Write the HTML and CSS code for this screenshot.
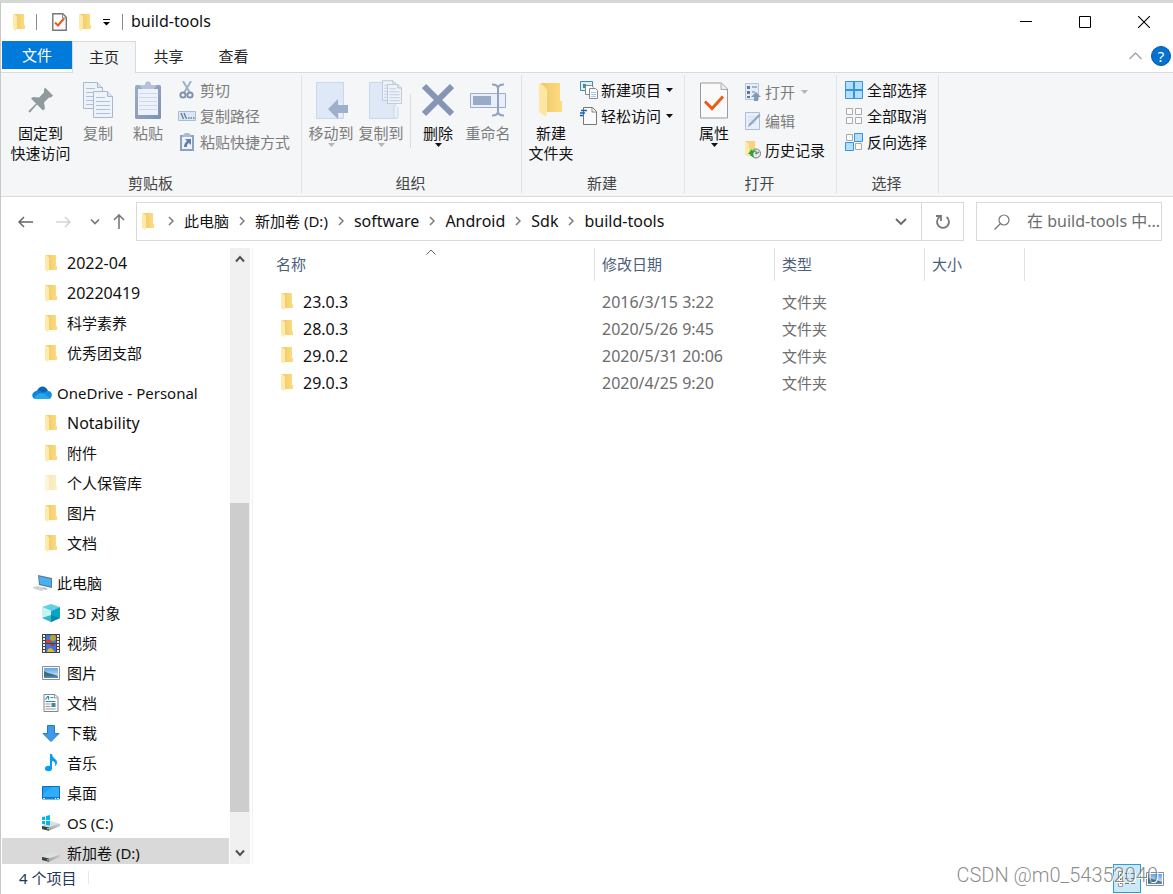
FILE: index.html
```html
<!DOCTYPE html>
<html lang="zh-CN">
<head>
<meta charset="utf-8">
<title>build-tools</title>
<link rel="stylesheet" href="styles.css">
</head>
<body>
<svg class="defs" aria-hidden="true">
  <defs>
    <linearGradient id="gold" x1="0" x2="1"><stop offset="0" stop-color="#efc968"/><stop offset="1" stop-color="#fddc80"/></linearGradient>
    <linearGradient id="clip" x1="0" y1="0" x2="1" y2="1"><stop offset="0" stop-color="#9badcb"/><stop offset="1" stop-color="#7e92b3"/></linearGradient>
    <linearGradient id="sky" x1="0" y1="0" x2="0" y2="1"><stop offset="0" stop-color="#5fa5ea"/><stop offset="1" stop-color="#d9eefb"/></linearGradient>
    <linearGradient id="disk" x1="0" x2="1"><stop offset="0" stop-color="#8d8d8d"/><stop offset="1" stop-color="#c9c9c9"/></linearGradient>
    <symbol id="folder" viewBox="0 0 12 17"><path d="M1 0h10v11h1v4H3z" fill="url(#gold)"/><path d="M0 0l2 .6 2 1.9V15l-1 2-3-2z" fill="#ffe9ab"/></symbol>
    <symbol id="chev" viewBox="0 0 6 10"><path d="M1 1l4 4-4 4" fill="none" stroke="#7a7a7a" stroke-width="1.5"/></symbol>
    <symbol id="down" viewBox="0 0 7 4"><path d="M0 0h7L3.500 4z" fill="currentColor"/></symbol>
    <symbol id="page" viewBox="0 0 20 27"><path d="M.5.5h14l5 5v21H.5z" fill="#eef3fa" stroke="#a9b8d0"/><path d="M14.500.5v5h5" fill="#dbe4f2" stroke="#a9b8d0"/><path d="M3 6.500h9M3 10.500h14M3 14.500h14M3 18.500h14M3 22.500h14" stroke="#b0bfd8"/></symbol>
    <symbol id="picture" viewBox="0 0 18 14"><path d="M.5.5h17v13H.5z" fill="#fff" stroke="#8e8e8e"/><path d="M2 2h14v10H2z" fill="url(#sky)"/><path d="M2 5l4 2 4 1 6 2v2H2z" fill="#426f70"/><path d="M2 10.500l14-.5v2H2z" fill="#4b88c4"/></symbol>
    <symbol id="drive" viewBox="0 0 18 10"><path d="M0 5l9-5 9 3v2L7 9z" fill="#dedede"/><path d="M0 5l7 1.500 11-4v2.600L7 9.800 0 8z" fill="url(#disk)"/><path d="M0 5l7 1.500v3.300L0 8z" fill="#3f4440"/><path d="M5 7h2v1.400H5z" fill="#52dc4b"/></symbol>
  </defs>
</svg>

<div class="window">
  <header class="titlebar">
    <svg class="i-folder" width="12" height="17"><use href="#folder"/></svg>
    <span class="bar"></span>
    <button class="quick" aria-label="属性"><svg width="15" height="18" viewBox="0 0 15 18"><path d="M.8.8h10l3.500 3.500v13H.8z" fill="#fbfbfb" stroke="#777" stroke-width="1.400"/><path d="M10.500 1v4h4" fill="none" stroke="#888"/><path d="M3 9.500l3 3 6-7" fill="none" stroke="#e8581f" stroke-width="2"/></svg></button>
    <button class="quick" aria-label="新建文件夹"><svg width="12" height="17"><use href="#folder"/></svg></button>
    <button class="quick" aria-label="自定义快速访问工具栏"><svg width="7" height="7" viewBox="0 0 7 7"><path d="M0 .5h7" stroke="#000"/><path d="M0 3h7L3.500 6.500z"/></svg></button>
    <span class="bar"></span>
    <h1>build-tools</h1>
    <div class="winbtns">
      <button aria-label="最小化"><svg width="12" height="12"><path d="M0 5.500h12" stroke="#000"/></svg></button>
      <button aria-label="最大化"><svg width="12" height="12"><path d="M.5.5h11v11H.5z" fill="none" stroke="#000"/></svg></button>
      <button aria-label="关闭"><svg width="12" height="12"><path d="M0 0l12 12M12 0L0 12" stroke="#000" stroke-width="1.100"/></svg></button>
    </div>
  </header>

  <nav class="tabs">
    <button class="file">文件</button>
    <button class="active">主页</button>
    <button>共享</button>
    <button>查看</button>
    <div class="help">
      <button aria-label="折叠功能区"><svg width="13" height="8"><path d="M.5 7l6-6 6 6" fill="none" stroke="#a3a3a3" stroke-width="1.400"/></svg></button>
      <button class="question" aria-label="帮助">?</button>
    </div>
  </nav>

  <section class="ribbon">
    <div class="group clipboard">
      <div class="tools">
        <button class="big pin"><svg width="26" height="27" viewBox="0 0 26 27"><path d="M17 1l8 8-2 2-2 0-5 5 1 6-2 2-6-6L2 26l-1.500-.5L1 24l7-7-5-5 2-1.500 6 .5 5-5V3z" fill="#8f9a9f"/></svg><span>固定到<br>快速访问</span></button>
        <button class="big dim"><svg width="30" height="36" viewBox="0 0 30 36"><use href="#page" width="20" height="27"/><use href="#page" x="10" y="9" width="20" height="27"/></svg><span>复制</span></button>
        <button class="big dim"><svg width="26" height="38" viewBox="0 0 26 38"><rect y="4" width="26" height="34" rx="1.500" fill="url(#clip)"/><path d="M3 8h20v26H3z" fill="#edf2fa"/><path d="M4 12.500h18M4 16.500h18M4 20.500h18M4 24.500h18M4 28.500h18" stroke="#cbd8ee"/><path d="M4 4h6c0-5 6-5 6 0h6l-3 4H7z" fill="#b4c2da"/></svg><span>粘贴</span></button>
        <div class="small">
          <button class="dim"><svg width="18" height="18" viewBox="0 0 18 18"><path d="M5 0l7 12M13 0L6 12" stroke="#9fb0cb" stroke-width="2"/><circle cx="5" cy="14" r="2.600" fill="none" stroke="#7f92b0" stroke-width="2"/><circle cx="12" cy="14" r="2.600" fill="none" stroke="#7f92b0" stroke-width="2"/></svg>剪切</button>
          <button class="dim"><svg width="18" height="18" viewBox="0 0 18 18"><path d="M.5 4.500h17v9H.5z" fill="#dce7f6" stroke="#aabbd4"/><path d="M3 6l2.500 6M6 6l2.500 6" stroke="#63799b" stroke-width="1.300"/><path d="M10 11h1.500M12.500 11H14M15 11h1.500" stroke="#63799b" stroke-width="1.500"/></svg>复制路径</button>
          <button class="dim"><svg width="18" height="18" viewBox="0 0 18 18"><path d="M2 2h14v16H2z" fill="#8ea1c0"/><path d="M4 4h10v12H4z" fill="#edf3fc"/><path d="M5 2l2-2h4l2 2v2H5z" fill="#acbbd3"/><path d="M7 6h6v6l-2-2c-2 1-2 2-2 4H6c0-3 1-4 3-6z" fill="#667ea5"/></svg>粘贴快捷方式</button>
        </div>
      </div>
      <h2>剪贴板</h2>
    </div>

    <div class="group organize">
      <div class="tools">
        <button class="big dim"><svg width="38" height="38" viewBox="-4 0 38 38"><path d="M.5 1.500h27v36H.5z" fill="#dfe8f6" stroke="#cbd7ea"/><path d="M22 22v15h5V22" fill="#ebf1fa" stroke="#cbd7ea"/><path d="M12 28l10-10v6h10v8H22v6z" fill="#9eafcb"/></svg><span>移动到</span><svg class="arrow" width="7" height="4"><use href="#down"/></svg></button>
        <button class="big dim"><svg width="44" height="38" viewBox="-10 0 44 38"><path d="M.5 1.500h26v36H.5z" fill="#dfe8f6" stroke="#cbd7ea"/><path d="M25 24v13h4V26" fill="#ebf1fa" stroke="#cbd7ea"/><use href="#page" x="13" y="-1" width="15" height="21"/><use href="#page" x="18" y="3" width="15" height="20"/></svg><span>复制到</span><svg class="arrow" width="7" height="4"><use href="#down"/></svg></button>
        <span class="split"></span>
        <button class="big"><svg width="32" height="34" viewBox="0 0 32 34"><path d="M2 3l28 28M30 3L2 31" stroke="#8596b5" stroke-width="6"/></svg><span>删除</span><svg class="arrow" width="7" height="4"><use href="#down"/></svg></button>
        <button class="big dim"><svg width="36" height="34" viewBox="0 0 36 34"><path d="M.5 10.500h35v14H.5z" fill="#e8effa" stroke="#9eaec9"/><path d="M3 13h18v9H3z" fill="#99aac7"/><path d="M22 1.500c4 0 6 1 6 4v23c0 3-2 4-6 4M34 1.500c-4 0-6 1-6 4v23c0 3 2 4 6 4" fill="none" stroke="#92a3c0" stroke-width="2"/></svg><span>重命名</span></button>
      </div>
      <h2>组织</h2>
    </div>

    <div class="group create">
      <div class="tools">
        <button class="big"><svg width="24" height="36" viewBox="0 0 24 36"><path d="M2 1h19v18h2v11H5z" fill="url(#gold)"/><path d="M0 1l5 3 3 4v22l-1 5-7-5z" fill="#ffe6a2"/></svg><span>新建<br>文件夹</span></button>
        <div class="small">
          <button><svg width="18" height="18" viewBox="0 0 18 18"><path d="M.5.5h12v9H.5z" fill="#d8f1f9" stroke="#438ba7"/><path d="M3 3h3v4H3z" fill="#528b78"/><path d="M5.500 4.500h6l2 2v7h-8z" fill="#fff" stroke="#888"/><path d="M9.500 7.500h6l2 2v8h-8z" fill="#f8fbff" stroke="#888"/><path d="M11 11.500h5M11 13.500h5M11 15.500h5" stroke="#a8c8ec"/></svg>新建项目<svg class="arrow" width="7" height="4"><use href="#down"/></svg></button>
          <button><svg width="18" height="18" viewBox="0 0 18 18"><path d="M3.500.5h9l4 4v13h-13z" fill="#fafafa" stroke="#777"/><path d="M12 1v4h4" fill="none" stroke="#888"/><path d="M1 3.500h6M0 6h5M0 8.500h3" stroke="#1762ad" stroke-width="1.400"/></svg>轻松访问<svg class="arrow" width="7" height="4"><use href="#down"/></svg></button>
        </div>
      </div>
      <h2>新建</h2>
    </div>

    <div class="group open">
      <div class="tools">
        <button class="big"><svg width="28" height="37" viewBox="0 0 28 37"><path d="M.5 1.500h21l6 6v29H.5z" fill="#fafafa" stroke="#9b9b9b"/><path d="M21 2v6h6" fill="#eee" stroke="#aaa"/><path d="M5 20l7 7 11-12" fill="none" stroke="#ef5919" stroke-width="3"/></svg><span>属性</span><svg class="arrow" width="7" height="4"><use href="#down"/></svg></button>
        <div class="small roomy">
          <button class="dim"><svg width="16" height="18" viewBox="0 0 16 18"><path d="M.5.5h13v16H.5z" fill="#e5edf9" stroke="#b5c3db"/><path d="M2 3h3v3H2zM2 8h3v3H2zM2 13h3v2H2z" fill="#5f78a0"/><path d="M7 4h5M7 9h3" stroke="#a1b3cf" stroke-width="2"/><path d="M11 9l5 5h-3v4H9v-4H6z" fill="#8296b7"/></svg>打开<svg class="arrow" width="7" height="4"><use href="#down"/></svg></button>
          <button class="dim"><svg width="16" height="18" viewBox="0 0 16 18"><path d="M.5.5h14v17H.5z" fill="#e7effb" stroke="#aebdd5"/><path d="M3 5h8M3 8h8M3 11h8" stroke="#cad6e9"/><path d="M3 15l1-3L14 2l1.500 1.500-10 10z" fill="#8fa3c3"/></svg>编辑</button>
          <button><svg width="16" height="18" viewBox="0 0 16 18"><path d="M1 0h9v15H3L0 13V0z" fill="#f5d47c"/><path d="M0 0l4 3v12l-4-2z" fill="#ffe9ab"/><circle cx="11" cy="12.500" r="4.500" fill="#e7ece8" stroke="#777"/><path d="M11 10v3l3-2" fill="none" stroke="#555"/><path d="M3 13l4-5v2c2-1 3-1 4 0-3 1-3 3-2 6-2 0-4-1-4-3z" fill="#23aa3c"/></svg>历史记录</button>
        </div>
      </div>
      <h2>打开</h2>
    </div>

    <div class="group select">
      <div class="tools">
        <div class="small">
          <button><svg width="18" height="18" viewBox="0 0 18 18"><path d="M.5.5h17v17H.5z" fill="#b5deff" stroke="#2f95e4"/><path d="M9 0v18M0 9h18" stroke="#2f95e4" stroke-width="2"/></svg>全部选择</button>
          <button><svg width="18" height="18" viewBox="0 0 18 18"><path d="M1.500 1.500h6v6h-6zM10.500 1.500h6v6h-6zM1.500 10.500h6v6h-6zM10.500 10.500h6v6h-6z" fill="#fafafa" stroke="#aaa"/></svg>全部取消</button>
          <button><svg width="18" height="18" viewBox="0 0 18 18"><path d="M1.500 1.500h6v6h-6zM10.500 10.500h6v6h-6z" fill="#fafafa" stroke="#aaa"/><path d="M9.500.5h8v8h-8zM.5 9.500h8v8h-8z" fill="#b5deff" stroke="#2f95e4"/></svg>反向选择</button>
        </div>
      </div>
      <h2>选择</h2>
    </div>
  </section>

  <div class="navrow">
    <div class="arrows">
      <button aria-label="后退"><svg width="16" height="12"><path d="M15 6H1M6 1L1 6l5 5" fill="none" stroke="#666" stroke-width="1.500"/></svg></button>
      <button aria-label="前进"><svg width="16" height="12"><path d="M0 6h14M9 1l5 5-5 5" fill="none" stroke="#d4d4d4" stroke-width="1.500"/></svg></button>
      <button class="narrow" aria-label="最近位置"><svg width="10" height="6"><path d="M1 .5l4 4 4-4" fill="none" stroke="#777" stroke-width="1.600"/></svg></button>
      <button class="narrow" aria-label="上移"><svg width="12" height="16"><path d="M6 15V1M1 6l5-5 5 5" fill="none" stroke="#777" stroke-width="1.600"/></svg></button>
    </div>
    <div class="address">
      <svg width="12" height="17"><use href="#folder"/></svg>
      <ol>
        <li><svg width="6" height="10"><use href="#chev"/></svg><a href="#pc">此电脑</a></li>
        <li><svg width="6" height="10"><use href="#chev"/></svg><a href="#d">新加卷 (D:)</a></li>
        <li><svg width="6" height="10"><use href="#chev"/></svg><a class="latin" href="#software">software</a></li>
        <li><svg width="6" height="10"><use href="#chev"/></svg><a class="latin" href="#android">Android</a></li>
        <li><svg width="6" height="10"><use href="#chev"/></svg><a class="latin" href="#sdk">Sdk</a></li>
        <li><svg width="6" height="10"><use href="#chev"/></svg><a class="latin" href="#build">build-tools</a></li>
      </ol>
      <button class="history" aria-label="历史位置"><svg width="12" height="8"><path d="M1 1l5 5 5-5" fill="none" stroke="#666" stroke-width="1.800"/></svg></button>
      <button class="refresh" aria-label="刷新"><svg width="16" height="16" viewBox="0 0 16 16"><path d="M11.500 3a6 6 0 1 1-7 0" fill="none" stroke="#777" stroke-width="1.800"/><path d="M1 2h5v5" fill="none" stroke="#777" stroke-width="1.800"/></svg></button>
    </div>
    <label class="search">
      <svg width="16" height="16" viewBox="0 0 16 16"><circle cx="10" cy="6" r="5" fill="none" stroke="#777" stroke-width="1.200"/><path d="M6.500 9.500L.5 15.500" stroke="#777" stroke-width="1.200"/></svg>
      <input class="latin" type="text" placeholder="在 build-tools 中..." aria-label="搜索">
    </label>
  </div>

  <main class="content">
    <aside class="tree">
      <ul>
        <li class="latin"><svg width="12" height="17"><use href="#folder"/></svg>2022-04</li>
        <li class="latin"><svg width="12" height="17"><use href="#folder"/></svg>20220419</li>
        <li><svg width="12" height="17"><use href="#folder"/></svg>科学素养</li>
        <li><svg width="12" height="17"><use href="#folder"/></svg>优秀团支部</li>
      </ul>
      <ul>
        <li class="root"><svg width="20" height="14" viewBox="0 0 20 14"><path d="M5 5C7-1 14-1 16 5l-4 3-8-2z" fill="#0a63b8"/><path d="M4 13c-5 0-5-7 0-8 3-1 5 0 7 2l-5 6z" fill="#1283d8"/><path d="M16 5c5 0 5 7 1 8l-6-6c1-1 3-2 5-2z" fill="#1490df"/><path d="M2 12c2-4 7-5 9-5l7 5c-1 1-1 1-3 1H5c-2 0-2 0-3-1z" fill="#28a8ea"/></svg>OneDrive - Personal</li>
        <li class="latin"><svg width="12" height="17"><use href="#folder"/></svg>Notability</li>
        <li><svg width="12" height="17"><use href="#folder"/></svg>附件</li>
        <li><svg class="faded" width="12" height="17"><use href="#folder"/></svg>个人保管库</li>
        <li><svg width="12" height="17"><use href="#folder"/></svg>图片</li>
        <li><svg width="12" height="17"><use href="#folder"/></svg>文档</li>
      </ul>
      <ul>
        <li class="root"><svg width="20" height="17" viewBox="0 0 20 17"><path d="M6 0l14 3v10L7 10z" fill="#62798b"/><path d="M7 1.500L19 4v7.500L8 9z" fill="#44b3f6"/><path d="M0 13l5-2 9 2-4 3z" fill="#ccd2d6"/><path d="M11 12l5 2-3 1z" fill="#a9b3b9"/></svg>此电脑</li>
        <li><svg width="18" height="18" viewBox="0 0 18 18"><path d="M0 3l9-3 9 3-9 4z" fill="#64cfe2"/><path d="M0 3l9 4v11l-9-4z" fill="#c5f3f4"/><path d="M18 3L9 7v11l9-4z" fill="#08a5c7"/><path d="M0 14l9-3v7z" fill="#38b8cc"/><path d="M9 11l9 3-9 4z" fill="#0789a7"/></svg>3D 对象</li>
        <li><svg width="18" height="19" viewBox="0 0 18 19"><path d="M0 0h18v19H0z" fill="#444"/><path d="M2 1v17M16 1v17" stroke="#eee" stroke-width="2" stroke-dasharray="2 1"/><path d="M4 1h10v8H4zM4 10h10v8H4z" fill="#4476d5"/><circle cx="11" cy="4" r="3" fill="#b4a62b"/><path d="M4 6h5v3H4z" fill="#dd3e32"/><path d="M8 10h5l-2 3z" fill="#b8382d"/><path d="M6 15l3-1 4 4H5z" fill="#e3b832"/></svg>视频</li>
        <li><svg width="18" height="14"><use href="#picture"/></svg>图片</li>
        <li><svg width="15" height="18" viewBox="0 0 15 18"><path d="M.5.5h11l3 3v14H.5z" fill="#fcfcfc" stroke="#858585"/><path d="M11 1v3h3" fill="none" stroke="#999"/><path d="M2 5.500l2-3h1v3M7 3.500h3M2 7.500h10" fill="none" stroke="#218ccc" stroke-width="1.200"/><path d="M2 10h5M2 12.500h5M2 15h10" stroke="#999"/><path d="M8 9h4v4H8z" fill="#47839c"/></svg>文档</li>
        <li><svg width="18" height="17" viewBox="0 0 18 17"><path d="M5.500.5h7v8h4.500l-8 8-8-8h4.500z" fill="#3e9be9" stroke="#247ac2"/></svg>下载</li>
        <li><svg width="12" height="18" viewBox="0 0 12 18"><ellipse cx="3.500" cy="14.500" rx="3.500" ry="2.700" fill="#069cf2"/><path d="M5 0h2c0 4 5 5 5 8 0 2-1 4-2 4 1-3-1-5-3-5v8H5z" fill="#069cf2"/></svg>音乐</li>
        <li><svg width="18" height="14" viewBox="0 0 18 14"><path d="M.5.5h17v12.500H.5z" fill="#1ca0f7" stroke="#0870b8"/><path d="M1 12V8l9-7h7v11z" fill="#30aefd"/><path d="M1 11.500h16" stroke="#1678c0"/><path d="M1 12.500h2M13 12.500h1M15 12.500h2" stroke="#fff"/></svg>桌面</li>
        <li><svg width="18" height="16" viewBox="0 0 18 16"><svg y="6" width="18" height="10"><use href="#drive"/></svg><path d="M0 2l3-.5V5H0zM4 1l4-1v5H4zM0 6h3v3.500L0 9zM4 6h4v4.500L4 10z" fill="#00b7ee"/></svg>OS (C:)</li>
        <li class="current"><svg class="disk" width="18" height="10"><use href="#drive"/></svg>新加卷 (D:)</li>
      </ul>
    </aside>
    <div class="scroll">
      <button aria-label="向上滚动"><svg width="10" height="8"><path d="M1 6.500l4-4.500 4 4.500" fill="none" stroke="#505050" stroke-width="2"/></svg></button>
      <div class="track"><div class="thumb"></div></div>
      <button aria-label="向下滚动"><svg width="10" height="8"><path d="M1 1.500L5 6l4-4.500" fill="none" stroke="#505050" stroke-width="2"/></svg></button>
    </div>
    <section class="files">
      <table>
        <thead><tr><th class="name">名称<svg class="sort" width="10" height="6"><path d="M.5 5.500L5 1l4.500 4.500" fill="none" stroke="#666"/></svg></th><th class="date">修改日期</th><th class="type">类型</th><th class="size">大小</th><th></th></tr></thead>
        <tbody>
          <tr><td class="latin"><svg width="12" height="17"><use href="#folder"/></svg>23.0.3</td><td class="latin">2016/3/15 3:22</td><td>文件夹</td><td></td><td></td></tr>
          <tr><td class="latin"><svg width="12" height="17"><use href="#folder"/></svg>28.0.3</td><td class="latin">2020/5/26 9:45</td><td>文件夹</td><td></td><td></td></tr>
          <tr><td class="latin"><svg width="12" height="17"><use href="#folder"/></svg>29.0.2</td><td class="latin">2020/5/31 20:06</td><td>文件夹</td><td></td><td></td></tr>
          <tr><td class="latin"><svg width="12" height="17"><use href="#folder"/></svg>29.0.3</td><td class="latin">2020/4/25 9:20</td><td>文件夹</td><td></td><td></td></tr>
        </tbody>
      </table>
    </section>
  </main>

  <footer class="status">
    <span class="count">4 个项目</span>
    <div class="views">
      <button class="on" aria-label="详细信息"><svg width="18" height="16" viewBox="0 0 18 16"><path d="M.5.5h4v15h-4z" fill="#fff" stroke="#999"/><path d="M2 3h1.500v2H2zM2 7h1.500v2H2z" fill="#4e8146"/><path d="M2 11h1.500v2H2z" fill="#b3443a"/><path d="M7 2.500h4M13 2.500h4M7 7.500h4M13 7.500h4M7 12.500h4M13 12.500h4" stroke="#777"/></svg></button>
      <button aria-label="大缩略图"><svg width="18" height="14"><use href="#picture"/></svg></button>
    </div>
    <span class="watermark">CSDN @m0_54352040</span>
  </footer>
</div>
</body>
</html>
```
FILE: styles.css
```css
* { box-sizing: border-box; }
html, body { height: 100%; }
body {
  margin: 0;
  background: #d5d7d7;
  color: #111;
  font: 15px/20px "Noto Sans", "Noto Sans CJK SC", sans-serif;
}
.defs { position: absolute; width: 0; height: 0; }
button {
  display: flex;
  align-items: center;
  justify-content: center;
  margin: 0;
  padding: 0;
  border: 0;
  background: none;
  color: inherit;
  font: inherit;
  white-space: nowrap;
}
svg { display: block; flex: none; }
h1, h2 { margin: 0; font-size: 15px; font-weight: 400; }
ul, ol { margin: 0; padding: 0; list-style: none; }
.latin { font-size: 16px; }

.window {
  display: flex;
  flex-direction: column;
  height: 100vh;
  border-top: 3px solid #d5d7d7;
  border-left: 1px solid #c8c8c8;
  background: #fff;
}

/* Title bar */
.titlebar { display: flex; align-items: center; flex: none; height: 38px; padding-left: 12px; }
.titlebar .bar { width: 1px; height: 16px; background: #8a8a8a; }
.titlebar .bar:nth-of-type(1) { margin: 0 15px 0 11px; }
.quick { margin-right: 12px; }
.titlebar h1 { padding: 0 0 2px 8px; font-size: 16px; }
.winbtns { display: flex; margin-left: auto; }
.winbtns button { width: 59px; height: 38px; }

/* Tabs */
.tabs { display: flex; flex: none; height: 31px; padding-left: 1px; color: #262626; }
.tabs > button { width: 65px; height: 31px; padding-bottom: 2px; }
.tabs .file { width: 70px; height: 28px; padding: 0; background: #007bdc; color: #fff; }
.tabs .active {
  width: 64px;
  height: 32px;
  border: 1px solid #dadbdc;
  border-bottom: 0;
  background: #f5f6f7;
  z-index: 1;
}
.help { display: flex; align-items: center; gap: 9px; margin-left: auto; padding: 0 2px 2px 0; }
.help .question {
  width: 20px;
  height: 20px;
  border: 1px solid #0b559b;
  border-radius: 50%;
  background: #0571d0;
  color: #fff;
}

/* Ribbon */
.ribbon {
  display: flex;
  flex: none;
  padding: 2px 0 3px 1px;
  border: 1px solid #dadbdc;
  border-width: 1px 0;
  background: #f5f6f7;
}
.group { display: flex; flex-direction: column; flex: none; border-right: 1px solid #e1e2e4; }
.clipboard { width: 300px; }
.organize { width: 220px; }
.create { width: 163px; }
.open { width: 152px; }
.select { width: 102px; }
.group h2 { padding-right: 2px; color: #444; line-height: 20px; text-align: center; }
.tools { display: flex; height: 98px; padding: 2px 3px 0 4px; }
.clipboard .tools { padding-left: 6px; }
.big { flex-direction: column; justify-content: flex-start; width: 50px; height: 96px; }
.big > svg:first-child { height: 46px; padding: 0; }
.big.pin { width: 65px; }
.dim { color: #7c7c7c; }
.dim .arrow { color: #b5b5b5; }
.split { width: 1px; height: 54px; margin: 17px 2px 0 4px; background: #dcdddf; }
.small { display: flex; flex-direction: column; margin-left: 5px; }
.small button { justify-content: flex-start; gap: 3px; height: 26px; }
.clipboard .small button { gap: 4px; }
.small .arrow { margin-left: 2px; }
.create .small, .select .small { margin-left: 4px; }
.select .small button { gap: 4px; }
.roomy { margin-left: 6px; }
.roomy button { gap: 4px; height: 29px; }

/* Navigation row */
.navrow { display: flex; flex: none; height: 51px; padding: 5px 11px 7px 6px; }
.arrows { display: flex; align-items: center; }
.arrows button { width: 38px; height: 39px; }
.arrows .narrow { width: 24px; }
.address { display: flex; align-items: center; flex: 1; min-width: 0; margin-left: 5px; border: 1px solid #d9d9d9; padding-left: 5px; }
.address ol { display: flex; flex: 1; margin-left: 14px; }
.address li { display: flex; align-items: center; gap: 10px; margin-right: 10px; padding-bottom: 2px; white-space: nowrap; }
.address a { color: #111; text-decoration: none; }
.history { width: 40px; height: 37px; }
.refresh { width: 42px; height: 37px; border-left: 1px solid #d9d9d9; }
.search { display: flex; align-items: center; gap: 17px; flex: none; width: 186px; margin-left: 12px; padding-left: 17px; border: 1px solid #d9d9d9; }
.search input { flex: 1; min-width: 0; height: 30px; padding: 0 0 2px; border: 0; outline: 0; font-family: inherit; }
.search input::placeholder { color: #6d6d6d; }

/* Content */
.content { display: flex; flex: 1; min-height: 0; }
.tree { flex: none; width: 228px; padding-left: 1px; overflow: hidden; }
.tree ul { margin-bottom: 10px; }
.tree li { display: flex; align-items: center; gap: 7px; height: 30px; padding-left: 40px; white-space: nowrap; }
.tree li > svg { width: 18px; }
.tree .root { gap: 5px; padding-left: 30px; }
.tree .root > svg { width: 20px; }
.tree .faded { opacity: .45; }
.tree .current { background: #d9d9d9; }
.tree .disk { margin-top: 8px; }
.scroll { display: flex; flex-direction: column; flex: none; width: 20px; margin-left: 1px; background: #f0f0f0; }
.scroll button { width: 20px; height: 22px; }
.track { display: flex; flex-direction: column; justify-content: flex-end; flex: 1; padding-bottom: 30px; }
.thumb { width: 19px; height: 57%; background: #cdcdcd; }
.files { flex: 1; min-width: 0; margin-left: 2px; border-left: 1px solid #f2f2f2; }
table { width: 100%; border-collapse: separate; border-spacing: 0; table-layout: fixed; }
th { position: relative; height: 33px; padding: 0 0 2px 7px; border-right: 1px solid #e2e2e2; color: #4c607a; font-weight: 400; text-align: left; }
th:last-child { border-right: 0; }
th.name { width: 342px; padding-left: 23px; }
th.date { width: 180px; }
th.type { width: 150px; }
th.size { width: 100px; }
.sort { position: absolute; top: 1px; left: 173px; }
tbody::before { content: ""; display: block; height: 8px; }
td { height: 27px; padding: 0 0 2px 7px; color: #6d6d6d; }
td:first-child { display: flex; align-items: center; gap: 10px; padding-left: 28px; color: #111; }

/* Status bar */
.status { position: relative; display: flex; flex: none; height: 30px; color: #1e395b; }
.count { height: 28px; padding: 4px 12px 0 18px; }
.count::after { content: ""; display: inline-block; width: 1px; height: 13px; margin-left: 12px; background: #e8e8e8; }
.views { display: flex; gap: 5px; margin-left: auto; padding-right: 9px; }
.views .on { width: 28px; height: 29px; border: 1px solid #26a0da; background: #cbe8f6; }
.watermark {
  position: absolute;
  right: 15px;
  top: 0;
  color: rgba(110, 110, 110, .8);
  font: 20px/22px Roboto, sans-serif;
  font-weight: 300;
  text-shadow: 1px 1px 0 #fff;
}
```
